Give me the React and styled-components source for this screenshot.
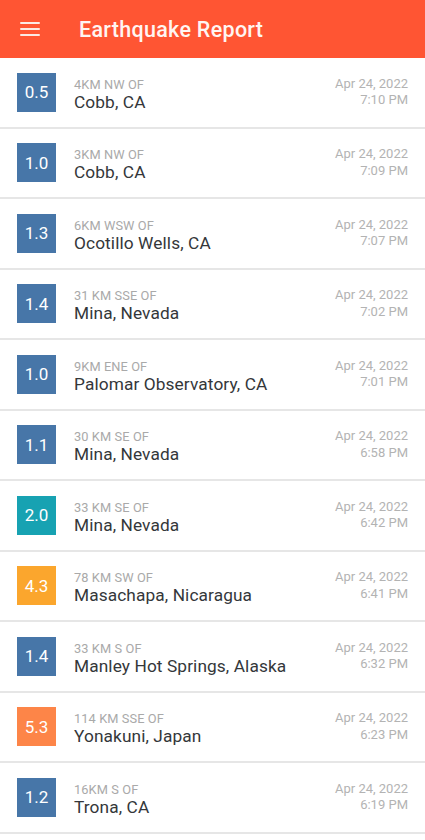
import React from 'react';
import styled, {createGlobalStyle} from 'styled-components';

const GlobalStyle = createGlobalStyle`
    html, body {
        margin: 0;
        padding: 0;
        background: #ffffff;
        font-family: Roboto, "Noto Sans", sans-serif;
    }
`;

const quakes = [
    {mag: '0.5', offset: '4KM NW OF', place: 'Cobb, CA', date: 'Apr 24, 2022', time: '7:10 PM'},
    {mag: '1.0', offset: '3KM NW OF', place: 'Cobb, CA', date: 'Apr 24, 2022', time: '7:09 PM'},
    {mag: '1.3', offset: '6KM WSW OF', place: 'Ocotillo Wells, CA', date: 'Apr 24, 2022', time: '7:07 PM'},
    {mag: '1.4', offset: '31 KM SSE OF', place: 'Mina, Nevada', date: 'Apr 24, 2022', time: '7:02 PM'},
    {mag: '1.0', offset: '9KM ENE OF', place: 'Palomar Observatory, CA', date: 'Apr 24, 2022', time: '7:01 PM'},
    {mag: '1.1', offset: '30 KM SE OF', place: 'Mina, Nevada', date: 'Apr 24, 2022', time: '6:58 PM'},
    {mag: '2.0', offset: '33 KM SE OF', place: 'Mina, Nevada', date: 'Apr 24, 2022', time: '6:42 PM'},
    {mag: '4.3', offset: '78 KM SW OF', place: 'Masachapa, Nicaragua', date: 'Apr 24, 2022', time: '6:41 PM'},
    {mag: '1.4', offset: '33 KM S OF', place: 'Manley Hot Springs, Alaska', date: 'Apr 24, 2022', time: '6:32 PM'},
    {mag: '5.3', offset: '114 KM SSE OF', place: 'Yonakuni, Japan', date: 'Apr 24, 2022', time: '6:23 PM'},
    {mag: '1.2', offset: '16KM S OF', place: 'Trona, CA', date: 'Apr 24, 2022', time: '6:19 PM'},
];

// colour by magnitude band
const magColor = (mag) => {
    const m = parseFloat(mag);
    if (m >= 5) {
        return '#fd8548';
    }
    if (m >= 4) {
        return '#fba62d';
    }
    if (m >= 2) {
        return '#17a2b2';
    }
    return '#4776a8';
};

const Screen = styled.div`
    width: 425px;
    height: 840px;
    overflow: hidden;
    display: flex;
    flex-direction: column;
`;

const AppBar = styled.header`
    height: 58px;
    flex-shrink: 0;
    background: #ff5533;
    display: flex;
    align-items: center;
    padding-left: 20px;
    box-sizing: border-box;
`;

const MenuButton = styled.div`
    width: 20px;
    display: flex;
    flex-direction: column;
    gap: 4px;
    margin-right: 39px;
    margin-top: -1px;

    span {
        display: block;
        height: 2px;
        background: #fbe9e4;
        border-radius: 1px;
    }
`;

const Title = styled.h1`
    margin: 0;
    font-size: 21.5px;
    font-weight: 500;
    color: #fff5f2;
    letter-spacing: 0.3px;
`;

const List = styled.ul`
    list-style: none;
    margin: 0;
    padding: 0;
`;

const Row = styled.li`
    height: 70.5px;
    box-sizing: border-box;
    display: flex;
    align-items: center;
    padding: 0 17px;
    border-bottom: 2px solid #e6e6e6;
`;

const Badge = styled.div`
    width: 39px;
    height: 39px;
    flex-shrink: 0;
    background: ${(p) => p.$color};
    color: #ffffff;
    font-size: 17px;
    display: flex;
    align-items: center;
    justify-content: center;
    margin-right: 18px;
`;

const Place = styled.div`
    flex: 1;
    display: flex;
    flex-direction: column;
    padding-top: 5px;
`;

const Offset = styled.div`
    font-size: 12.8px;
    line-height: 15px;
    color: #a9a9a9;
    letter-spacing: 0.1px;
`;

const City = styled.div`
    font-size: 17.3px;
    line-height: 21px;
    color: #34373a;
    letter-spacing: 0.1px;
`;

const When = styled.div`
    text-align: right;
    font-size: 13px;
    line-height: 16.3px;
    color: #b3b3b3;
`;

const App = () => (
    <Screen>
        <GlobalStyle/>
        <AppBar>
            <MenuButton>
                <span/>
                <span/>
                <span/>
            </MenuButton>
            <Title>{'Earthquake Report'}</Title>
        </AppBar>
        <List>
            {quakes.map((q, i) => (
                <Row key={i}>
                    <Badge $color={magColor(q.mag)}>{q.mag}</Badge>
                    <Place>
                        <Offset>{q.offset}</Offset>
                        <City>{q.place}</City>
                    </Place>
                    <When>
                        <div>{q.date}</div>
                        <div>{q.time}</div>
                    </When>
                </Row>
            ))}
        </List>
    </Screen>
);

export default App;
